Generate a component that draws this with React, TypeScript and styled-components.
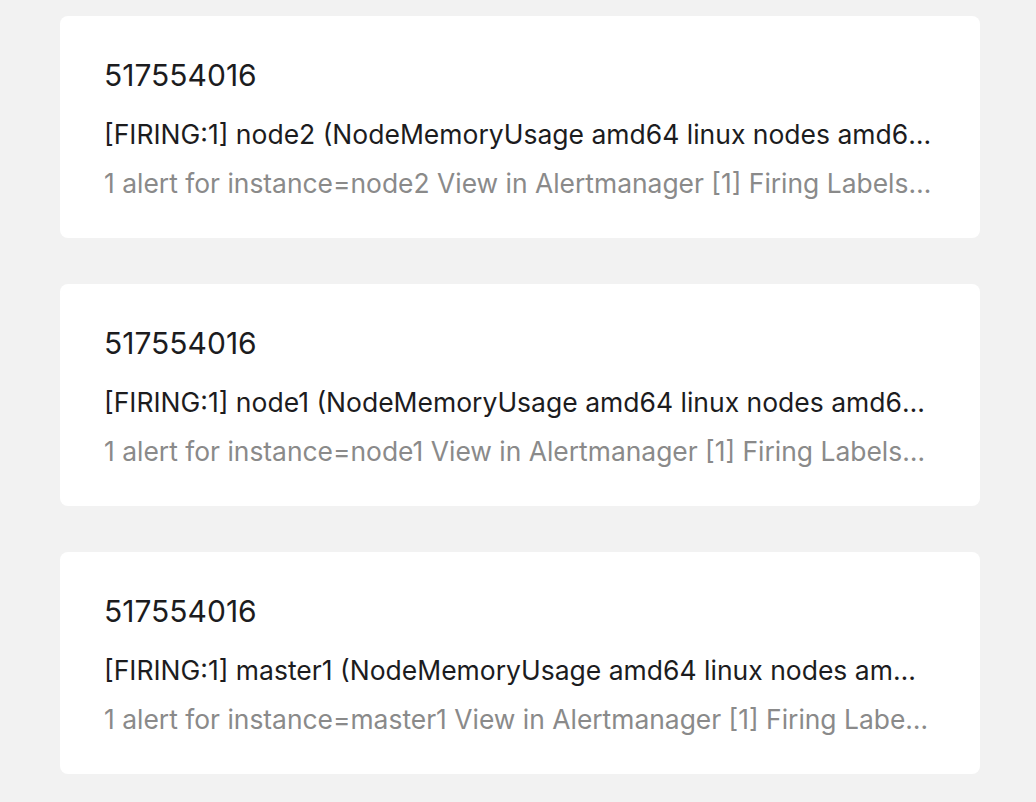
import React from 'react';
import styled, { createGlobalStyle } from 'styled-components';

const GlobalStyle = createGlobalStyle`
  html, body {
    margin: 0;
    padding: 0;
    background: #f2f2f2;
  }
  body {
    font-family: Inter, "Noto Sans", "Liberation Sans", sans-serif;
    -webkit-font-smoothing: antialiased;
  }
`;

const List = styled.div`
  display: flex;
  flex-direction: column;
  gap: 46px;
  padding: 16px 56px 16px 60px;
`;

const Card = styled.div`
  background: #fff;
  border-radius: 8px;
  padding: 39px 48.5px 37px 44px;
  display: flex;
  flex-direction: column;
  min-width: 0;
`;

const sizes = {
  title: { font: '30px', lh: '40px', mt: '0' },
  subject: { font: '26.5px', lh: '38px', mt: '20px' },
  desc: { font: '26.42px', lh: '36px', mt: '12px' },
};

const Line = styled.div<{ $kind: 'title' | 'subject' | 'desc' }>`
  white-space: nowrap;
  overflow: hidden;
  text-overflow: ellipsis;
  font-size: ${(p) => sizes[p.$kind].font};
  line-height: ${(p) => sizes[p.$kind].lh};
  margin-top: ${(p) => sizes[p.$kind].mt};
  color: ${(p) => (p.$kind === 'desc' ? '#8a8a8a' : '#1c1c1e')};
`;

type Alert = {
  id: string;
  subject: string;
  desc: string;
};

const alerts: Alert[] = [
  {
    id: '517554016',
    subject: '[FIRING:1] node2 (NodeMemoryUsage amd64 linux nodes amd64 linux node2 node-exporter monitoring)',
    desc: '1 alert for instance=node2 View in Alertmanager [1] Firing Labels alertname = NodeMemoryUsage',
  },
  {
    id: '517554016',
    subject: '[FIRING:1] node1 (NodeMemoryUsage amd64 linux nodes amd64 linux node1 node-exporter monitoring)',
    desc: '1 alert for instance=node1 View in Alertmanager [1] Firing Labels alertname = NodeMemoryUsage',
  },
  {
    id: '517554016',
    subject: '[FIRING:1] master1 (NodeMemoryUsage amd64 linux nodes amd64 linux master1 node-exporter monitoring)',
    desc: '1 alert for instance=master1 View in Alertmanager [1] Firing Labels alertname = NodeMemoryUsage',
  },
];

export default function App() {
  return (
    <>
      <GlobalStyle />
      <List>
        {alerts.map((a, i) => (
          <Card key={i}>
            <Line $kind="title">{a.id}</Line>
            <Line $kind="subject">{a.subject}</Line>
            <Line $kind="desc">{a.desc}</Line>
          </Card>
        ))}
      </List>
    </>
  );
}
